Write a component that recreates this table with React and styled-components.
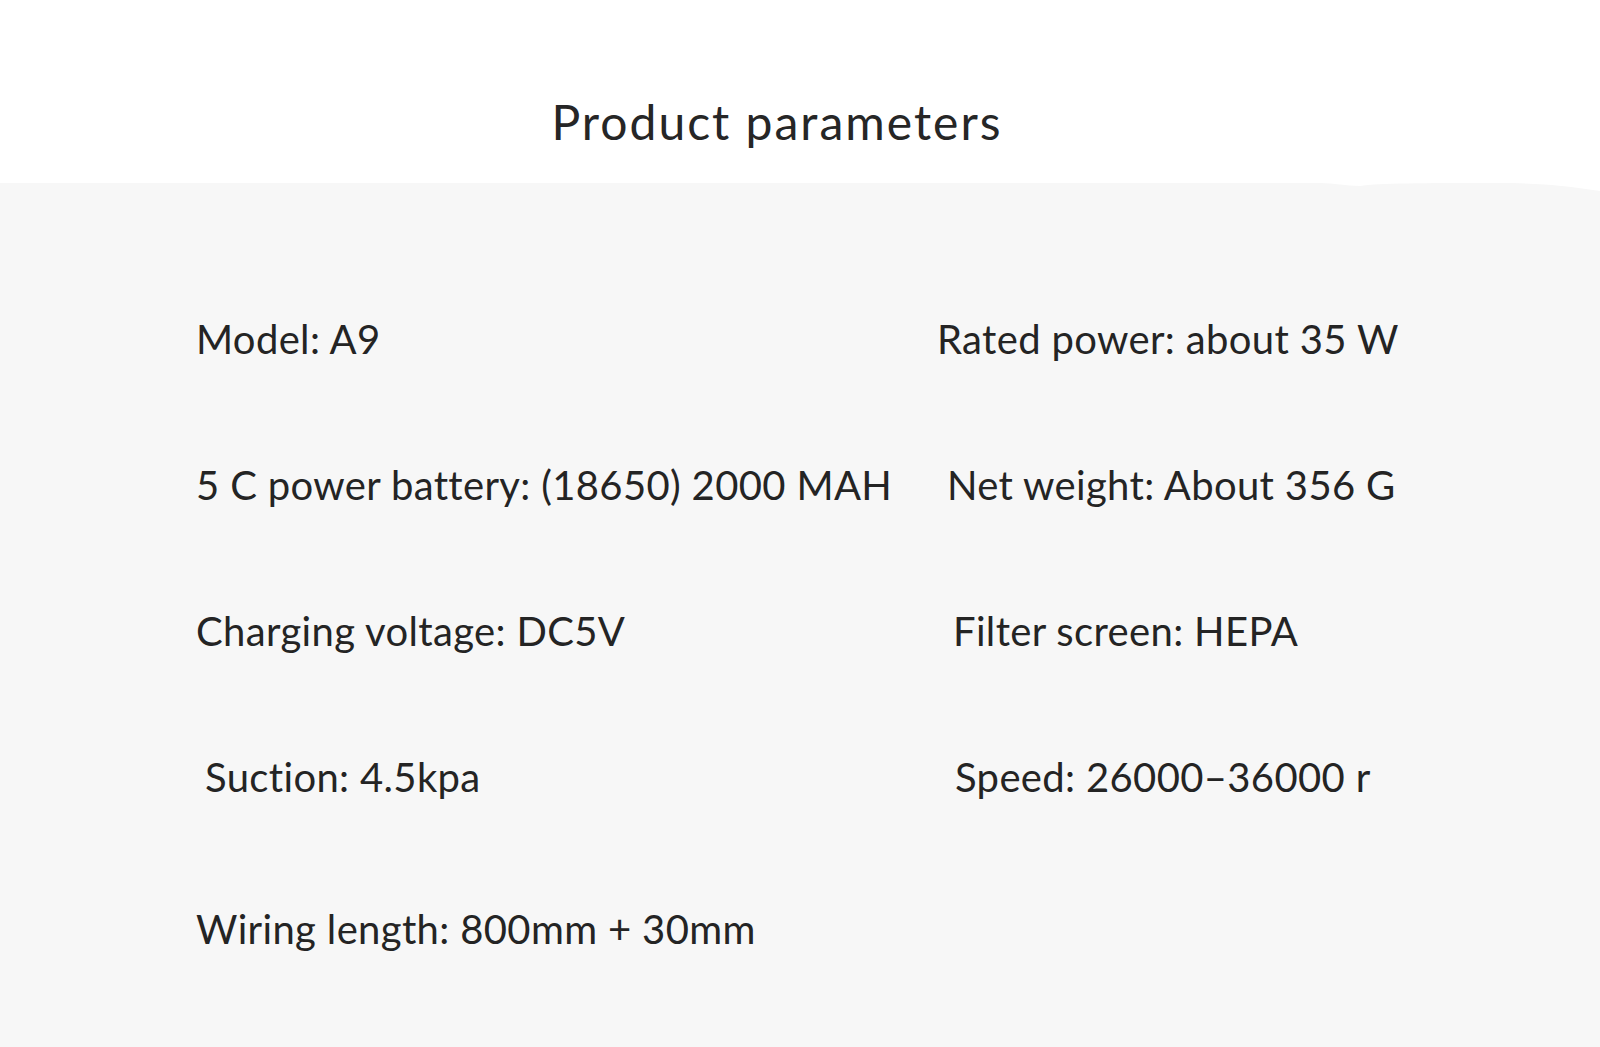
import React from 'react'
import styled, { createGlobalStyle } from 'styled-components'

const GlobalStyle = createGlobalStyle`
  html, body {
    margin: 0;
    padding: 0;
    background: #ffffff;
  }
  body {
    font-family: Lato, "Noto Sans", "Liberation Sans", sans-serif;
    color: #252525;
  }
`

const params = [
  { text: 'Model: A9' },
  { text: 'Rated power: about 35 W' },
  { text: '5 C power battery: (18650) 2000 MAH' },
  { text: 'Net weight: About 356 G', indent: 10 },
  { text: 'Charging voltage: DC5V' },
  { text: 'Filter screen: HEPA', indent: 16 },
  { text: 'Suction: 4.5kpa', indent: 9 },
  { text: 'Speed: 26000–36000 r', indent: 18 },
  { text: 'Wiring length: 800mm + 30mm', last: true },
]

const App = () => {
  return (
    <Page>
      <GlobalStyle />
      <Header>
        <Title>Product parameters</Title>
      </Header>
      <Panel>
        <Edge viewBox='0 0 1600 10' preserveAspectRatio='none'>
          <path
            d='M0 0 L1320 0 C1335 0 1345 3 1360 3 C1380 0 1420 0 1500 0 C1540 0 1570 3 1600 8 L1600 10 L0 10 Z'
            fill='#f7f7f7'
          />
        </Edge>
        <Grid>
          {params.map((p) => (
            <Item key={p.text} indent={p.indent || 0} last={p.last}>
              {p.text}
            </Item>
          ))}
        </Grid>
      </Panel>
    </Page>
  )
}

export default App

const Page = styled.div`
  width: 1600px;
  min-height: 1047px;
  display: flex;
  flex-direction: column;
`
const Header = styled.header`
  height: 183px;
  display: flex;
  justify-content: center;
  padding-right: 46px;
  box-sizing: border-box;
`
const Title = styled.h1`
  margin: 94px 0 0;
  font-size: 48px;
  font-weight: 400;
  line-height: 56px;
  color: #262626;
  letter-spacing: 2px;
`
const Panel = styled.section`
  flex: 1;
  background: #f7f7f7;
  padding-bottom: 60px;
`
const Edge = styled.svg`
  display: block;
  width: 100%;
  height: 10px;
  background: #ffffff;
`
const Grid = styled.div`
  display: grid;
  grid-template-columns: 741px 1fr;
  row-gap: 98px;
  padding: 122px 0 0 196px;
`
const Item = styled.div`
  font-size: 40px;
  line-height: 48px;
  font-weight: 400;
  letter-spacing: 0.35px;
  color: #242424;
  white-space: nowrap;
  padding-left: ${(p) => p.indent}px;
  margin-top: ${(p) => (p.last ? '6px' : '0')};
`
